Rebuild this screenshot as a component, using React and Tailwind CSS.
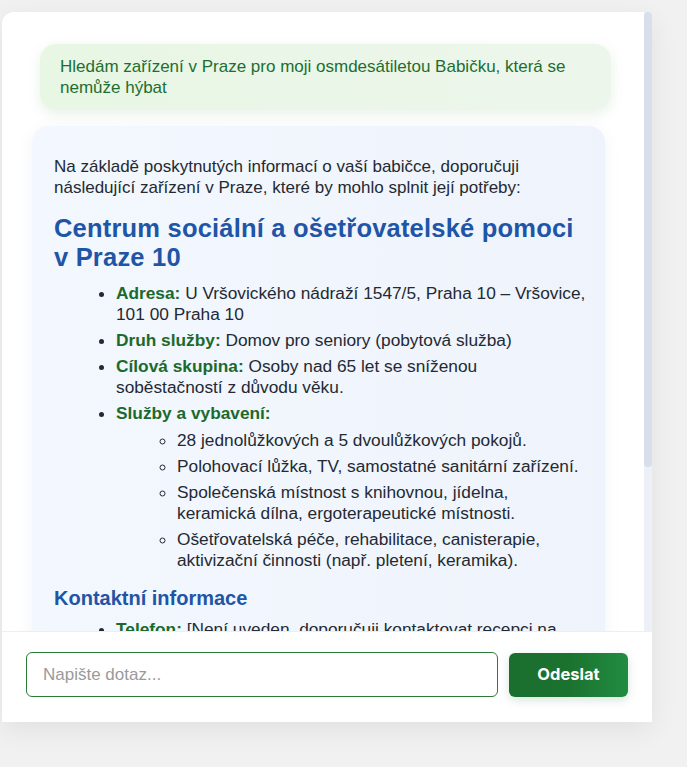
import React from 'react';

const sans = { fontFamily: '"Liberation Sans", Arial, Helvetica, sans-serif' };

const Label = ({ children }) => (
  <strong className="font-bold text-[#1b6a2c]">{children}</strong>
);

const App = () => {
  return (
    <div className="min-h-screen bg-[#f1f1f1] pt-3 pl-[2px]" style={sans}>
      <div className="w-[650px] h-[710px] bg-white rounded-tl-xl flex flex-col shadow-[0_8px_28px_rgba(0,0,0,0.07)]">
        <div className="flex-1 min-h-0 flex">
          <div className="flex-1 min-w-0 overflow-hidden pt-8 pb-6">
            <div className="ml-[38px] mr-[33px] rounded-2xl bg-gradient-to-r from-[#e8f6e4] to-[#edf6ec] px-5 py-3 text-[17px] leading-[21px] text-[#1d6e30] shadow-[0_4px_14px_rgba(76,140,70,0.12)]">
              Hledám zařízení v Praze pro moji osmdesátiletou Babičku, která se nemůže hýbat
            </div>

            <div className="ml-[30px] mr-[39px] mt-4 rounded-2xl bg-gradient-to-r from-[#f3f7fe] to-[#eff3fb] pl-[22px] pr-[19px] pt-[30px] pb-6 text-[17px] leading-[21px] text-[#232a33] shadow-[0_4px_16px_rgba(90,110,160,0.08)]">
              <p>
                Na základě poskytnutých informací o vaší babičce, doporučuji následující zařízení v Praze, které by mohlo splnit její potřeby:
              </p>

              <h3 className="mt-4 text-[25.5px] leading-[29px] tracking-[0.2px] font-bold text-[#1f55a6]">
                Centrum sociální a ošetřovatelské pomoci v Praze 10
              </h3>

              <ul className="mt-[11px] pl-[62px] list-disc text-[17.3px]">
                <li className="mb-[5px]">
                  <Label>Adresa:</Label> U Vršovického nádraží 1547/5, Praha 10 – Vršovice, 101 00 Praha 10
                </li>
                <li className="mb-[5px]">
                  <Label>Druh služby:</Label> Domov pro seniory (pobytová služba)
                </li>
                <li className="mb-[5px]">
                  <Label>Cílová skupina:</Label> Osoby nad 65 let se sníženou soběstačností z důvodu věku.
                </li>
                <li>
                  <Label>Služby a vybavení:</Label>
                  <ul className="mt-[6px] pl-[61px] list-[circle]">
                    <li className="mb-[5px]">28 jednolůžkových a 5 dvoulůžkových pokojů.</li>
                    <li className="mb-[5px]">Polohovací lůžka, TV, samostatné sanitární zařízení.</li>
                    <li className="mb-[5px]">Společenská místnost s knihovnou, jídelna, keramická dílna, ergoterapeutické místnosti.</li>
                    <li className="mb-[5px]">Ošetřovatelská péče, rehabilitace, canisterapie, aktivizační činnosti (např. pletení, keramika).</li>
                  </ul>
                </li>
              </ul>

              <h4 className="mt-[15px] text-[20px] leading-[24px] font-bold text-[#1f55a6]">
                Kontaktní informace
              </h4>

              <ul className="mt-[9px] pl-[62px] list-disc text-[17.3px]">
                <li className="mb-[5px]">
                  <Label>Telefon:</Label> [Není uveden, doporučuji kontaktovat recepci na uvedené adrese]
                </li>
                <li className="mb-[5px]">
                  <Label>E-mail:</Label> [Není uveden]
                </li>
              </ul>
            </div>
          </div>

          <div className="w-2 shrink-0 bg-[#edf1f7]">
            <div className="h-[455px] rounded-full bg-[#d6dfeb]" />
          </div>
        </div>

        <div className="flex items-center gap-[11px] border-t border-[#eceef1] pl-6 pr-6 pt-5 pb-[25px]">
          <input
            autoFocus
            placeholder="Napište dotaz..."
            className="flex-1 h-[45px] rounded-md border border-[#2c7a3a] bg-white px-4 text-[17px] text-[#222] placeholder:text-[#9a9a9a] caret-[#0a6cff] outline-none"
            style={sans}
          />
          <button
            className="h-[44px] w-[119px] rounded-md bg-gradient-to-r from-[#1a6e2e] via-[#1b722f] to-[#218c42] text-[16.5px] font-bold text-white shadow-[0_3px_10px_rgba(30,110,50,0.18)]"
            style={{ fontFamily: 'Inter, "Liberation Sans", sans-serif' }}
          >
            Odeslat
          </button>
        </div>
      </div>
    </div>
  );
};

export default App;
